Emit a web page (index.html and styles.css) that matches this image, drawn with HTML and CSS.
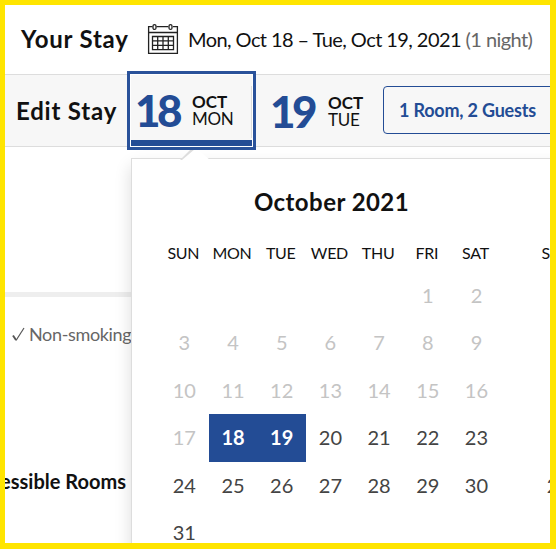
FILE: index.html
```
<!DOCTYPE html>
<html lang="en">
<head>
<meta charset="utf-8">
<title>Your Stay</title>
<link rel="stylesheet" href="styles.css">
</head>
<body>
<main class="frame">
  <header class="summary">
    <h1 class="summary-title">Your Stay</h1>
    <svg class="calendar-icon" width="32" height="32" viewBox="0 0 32 32" fill="none" stroke="#222" stroke-width="1.3">
      <path d="M5.5 3.6H1.6v26.8h28.8V3.6H26M9.5 3.6h11.8M1.6 9.5h28.8"/>
      <rect x="6" y="1.6" width="3" height="4.8" rx="1.5"/>
      <rect x="22" y="1.6" width="3" height="4.8" rx="1.5"/>
      <path d="M5.5 13.5h21v13.2h-21zM5.5 17.9h21M5.5 22.3h21M10.7 13.5v13.2M16 13.5v13.2M21.3 13.5v13.2"/>
    </svg>
    <p class="summary-dates"><span class="range">Mon, Oct 18 – Tue, Oct 19, 2021</span> <span class="nights">(1 night)</span></p>
  </header>
  <section class="edit">
    <h2 class="edit-title">Edit Stay</h2>
    <button class="date date-active"><span class="num">18</span><span class="label"><b>OCT</b><span>MON</span></span></button>
    <button class="date date-out"><span class="num">19</span><span class="label"><b>OCT</b><span>TUE</span></span></button>
    <button class="guests"><span>1 Room, 2 Guests</span></button>
  </section>
  <section class="rooms">
    <div class="photo"></div>
    <p class="feature"><svg width="13" height="15" viewBox="0 0 13 15" fill="none" stroke="#555"><path stroke-width="1.9" d="M1 8.5l3 4.5"/><path stroke-width="1.2" d="M4 13.5L12 1"/></svg><span>Non-smoking</span></p>
    <h3 class="accessible"><span>essible Rooms</span></h3>
  </section>
  <section class="popover">
    <svg class="pointer" width="32" height="12" viewBox="0 0 32 12"><path d="M1 12L12 1h5l13 11z" fill="#fff"/><path d="M0 12L11 1h4L2 12z" fill="#ddd"/></svg>
    <div class="month">
      <h2 class="month-title"><span>October 2021</span></h2>
      <div class="weekdays"><span>SUN</span><span>MON</span><span>TUE</span><span>WED</span><span>THU</span><span>FRI</span><span>SAT</span></div>
      <div class="days">
        <i></i><i></i><i></i><i></i><i></i><span class="past">1</span><span class="past">2</span>
        <span class="past">3</span><span class="past">4</span><span class="past">5</span><span class="past">6</span><span class="past">7</span><span class="past">8</span><span class="past">9</span>
        <span class="past">10</span><span class="past">11</span><span class="past">12</span><span class="past">13</span><span class="past">14</span><span class="past">15</span><span class="past">16</span>
        <span class="past">17</span><span class="chosen">18</span><span class="chosen">19</span><span>20</span><span>21</span><span>22</span><span>23</span>
        <span>24</span><span>25</span><span>26</span><span>27</span><span>28</span><span>29</span><span>30</span>
        <span>31</span>
      </div>
    </div>
    <div class="month-next">
      <div class="weekdays"><span>SUN</span></div>
      <div class="days"><i></i><i></i><i></i><i></i><span>28</span></div>
    </div>
  </section>
</main>
</body>
</html>
```
FILE: styles.css
```
* { box-sizing: border-box; margin: 0; padding: 0; }
body { width: 556px; height: 549px; overflow: hidden; font-family: Lato, "Liberation Sans", sans-serif; color: #111; }
.frame { position: relative; width: 556px; height: 549px; border: solid #ffe500; border-width: 5px 6px 6px 5px; background: #fff; overflow: hidden; white-space: nowrap; }
button { font: inherit; color: inherit; background: none; border: 0; text-align: left; }

.summary { display: flex; align-items: center; height: 69px; padding-left: 16px; }
.summary-title { flex: none; width: 127px; margin-top: -2px; font-size: 24px; line-height: 30px; font-weight: 700; letter-spacing: .8px; }
.calendar-icon { flex: none; margin: -2px 9px 0 -1px; }
.summary-dates { margin-top: -2px; font-size: 20px; letter-spacing: -.57px; }
.nights { color: #666; }

.edit { display: flex; align-items: center; height: 73px; padding-left: 11px; border: solid #ddd; border-width: 1px 0; background: #f7f7f7; }
.edit-title { flex: none; width: 111px; font-size: 24px; line-height: 30px; font-weight: 700; letter-spacing: .8px; }
.date { flex: none; display: flex; align-items: center; }
.date-active { position: relative; z-index: 3; width: 129px; height: 79px; margin-top: -1px; padding: 0 0 0 6px; border: 3px solid #2a529a; background: linear-gradient(#ddd, #ddd) 121px 12px / 1px 52px no-repeat, linear-gradient(#234c95, #234c95) 1px 66px / 121px 6px no-repeat, #f7f7f7; box-shadow: inset 0 0 0 1px #fff; }
.date-out { width: 112px; margin-left: 15px; }
.num { width: 56px; font-size: 44px; line-height: 50px; font-weight: 900; color: #234c95; letter-spacing: -3.5px; text-indent: -1px; }
.label { display: flex; flex-direction: column; font-size: 17px; line-height: 17px; letter-spacing: -.3px; }
.label b { letter-spacing: 0; }
.date-out .label { margin-left: 1px; }
.guests { flex: none; width: 180px; height: 48px; margin: -1px 0 0; padding-left: 15px; border: 1px solid #234c95; border-radius: 4px; color: #234c95; font-size: 18px; font-weight: 700; letter-spacing: -.2px; }

.rooms { width: 126px; }
.photo { height: 150px; border-bottom: 5px solid #eee; }
.feature { display: flex; align-items: center; gap: 4px; padding: 26px 0 0 7px; font-size: 18px; line-height: 22px; letter-spacing: -.35px; color: #666; }
.feature svg { flex: none; }
.accessible { display: flex; justify-content: flex-end; padding: 123px 5px 0 0; font-size: 20px; line-height: 26px; }

.popover { position: absolute; z-index: 2; left: 126px; top: 153px; width: 600px; height: 440px; display: flex; padding: 0 0 0 28px; border: 1px solid #ddd; background: #fff; box-shadow: 0 8px 16px rgba(0,0,0,.14); }
.pointer { position: absolute; left: 48px; top: -11px; }
.month { width: 341px; }
.month-title { padding: 28px 0 0 2px; font-size: 24px; line-height: 30px; text-align: center; letter-spacing: .45px; }
.weekdays { display: grid; grid-template-columns: repeat(7, 48.7px); margin: 26px 0 0 -1px; height: 20px; font-size: 16px; line-height: 20px; letter-spacing: -.3px; text-align: center; }
.days { display: grid; grid-template-columns: repeat(7, 48.7px); grid-auto-rows: 47.4px; margin-top: 9px; font-size: 20px; line-height: 46px; text-align: center; color: #444; }
.days .past { color: #c4c4c4; }
.days .chosen { background: #234c95; color: #fff; font-weight: 700; }
.month-next { width: 50px; margin: 58px 0 0 33px; }
.month-next .weekdays, .month-next .days { grid-template-columns: 48.7px; }
```
